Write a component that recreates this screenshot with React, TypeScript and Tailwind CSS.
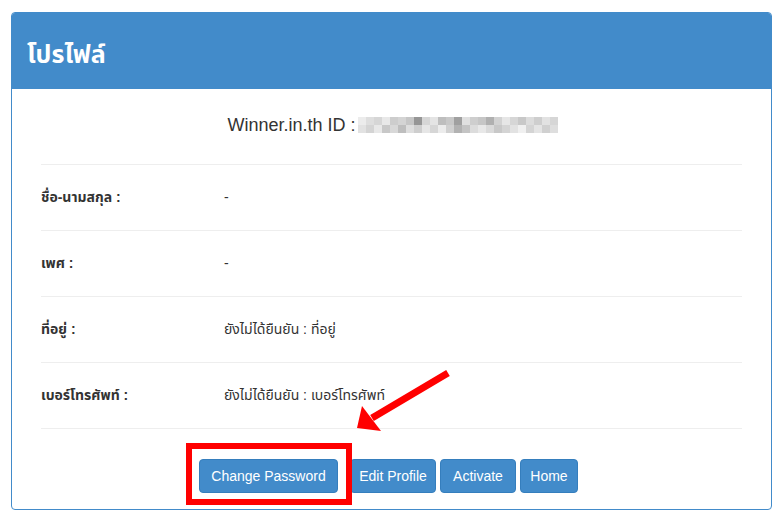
const idCells = [
  [236, 222, 214, 232, 205, 212, 198, 150, 214, 228, 190, 200, 160, 224, 206, 198, 176, 210, 230, 214, 200, 220, 206, 226, 214],
  [226, 212, 232, 200, 216, 190, 222, 206, 230, 214, 236, 208, 178, 196, 220, 232, 218, 200, 212, 226, 240, 212, 228, 208, 222],
];

const rows = [
  { label: "ชื่อ-นามสกุล :", value: "-" },
  { label: "เพศ :", value: "-" },
  { label: "ที่อยู่ :", value: "ยังไม่ได้ยืนยัน : ที่อยู่" },
  { label: "เบอร์โทรศัพท์ :", value: "ยังไม่ได้ยืนยัน : เบอร์โทรศัพท์" },
];

function BlurredId() {
  return (
    <svg width="200" height="16" className="block">
      {idCells.map((row, r) =>
        row.map((g, c) => (
          <rect key={`${r}-${c}`} x={c * 8} y={r * 8} width="8" height="8" fill={`rgb(${g},${g},${g})`} />
        )),
      )}
    </svg>
  );
}

function Btn({ children, className = "" }: { children: React.ReactNode; className?: string }) {
  return (
    <button
      className={`block h-[34px] whitespace-nowrap rounded-[4px] border border-[#357ebd] bg-[#428bca] px-0 text-[14px] leading-[20px] text-white ${className}`}
    >
      {children}
    </button>
  );
}

export default function App() {
  return (
    <div
      className="relative h-[522px] w-[784px] bg-white pl-[11px] pt-[12px] text-[#333]"
      style={{ fontFamily: '"Liberation Sans", Tahoma, "Noto Sans Thai", "Noto Sans", sans-serif' }}
    >
      <div className="w-[761px] overflow-hidden rounded-[4px] border border-[#428bca]">
        <div className="flex h-[76px] items-center bg-[#428bca] pl-[15px] pt-[8px]">
          <h1 className="text-[25px] font-bold text-white">โปรไฟล์</h1>
        </div>
        <div className="px-[29px] pb-[16px]">
          <div className="flex h-[75px] items-center justify-center pb-[3px] pl-[2px]">
            <span className="text-[18px]">Winner.in.th ID :</span>
            <span className="ml-[2px]">
              <BlurredId />
            </span>
          </div>
          {rows.map((r) => (
            <div key={r.label} className="flex h-[66px] items-center border-t border-[#eeeeee] text-[14px]">
              <div className="w-[183px] font-bold">{r.label}</div>
              <div>{r.value}</div>
            </div>
          ))}
          <div className="flex justify-center border-t border-[#eeeeee] pr-[6px] pt-[30px]">
            <div className="relative mr-[12px] flex">
              <Btn className="w-[139px]">Change Password</Btn>
              <div className="pointer-events-none absolute -bottom-[12px] -left-[13px] -right-[14px] -top-[16px] border-[6px] border-[#ff0000]" />
            </div>
            <Btn className="mr-[4px] w-[86px]">Edit Profile</Btn>
            <Btn className="mr-[4px] w-[76px]">Activate</Btn>
            <Btn className="w-[58px]">Home</Btn>
          </div>
        </div>
      </div>
      <svg className="pointer-events-none absolute left-0 top-0" width="784" height="522">
        <line x1="448" y1="373" x2="372" y2="418" stroke="#ff0000" strokeWidth="7" />
        <polygon points="357,428 362,406 381,431" fill="#ff0000" />
      </svg>
    </div>
  );
}
